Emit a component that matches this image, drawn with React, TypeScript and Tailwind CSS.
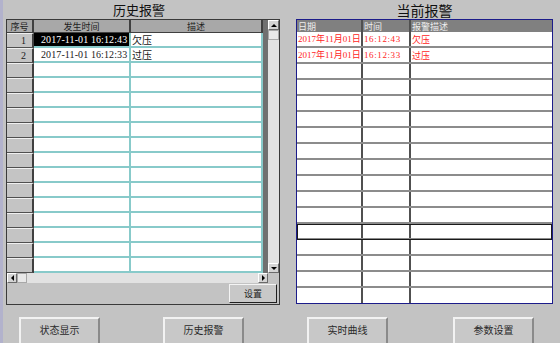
const CJK = "font-['Noto_Sans_CJK_SC',sans-serif]";
const NUM = "font-['Liberation_Serif','Noto_Sans_CJK_SC',serif]";

const history = [
  { n: "1", t: "2017-11-01 16:12:43", d: "欠压", sel: true },
  { n: "2", t: "2017-11-01 16:12:33", d: "过压", sel: false },
];

const current = [
  { date: "2017年11月01日", time: "16:12:43", d: "欠压" },
  { date: "2017年11月01日", time: "16:12:33", d: "过压" },
];

function Arrow({ dir }: { dir: "up" | "down" | "left" | "right" }) {
  const pts = {
    up: "0,4 3,1 6,4",
    down: "0,1 3,4 6,1",
    left: "4,0 1,3 4,6",
    right: "1,0 4,3 1,6",
  }[dir];
  const size = dir === "up" || dir === "down" ? { w: 6, h: 5 } : { w: 5, h: 6 };
  return (
    <svg width={size.w} height={size.h} viewBox={`0 0 ${size.w} ${size.h}`}>
      <polygon points={pts} fill="#000" />
    </svg>
  );
}

function ScrollBtn({ dir, className = "" }: { dir: "up" | "down" | "left" | "right"; className?: string }) {
  return (
    <div
      className={`shrink-0 flex items-center justify-center bg-[#d4d4d4] border border-t-white border-l-white border-r-[#6a6a6a] border-b-[#6a6a6a] ${className}`}
    >
      <Arrow dir={dir} />
    </div>
  );
}

function HistoryRow({ n, t, d, sel }: { n?: string; t?: string; d?: string; sel?: boolean }) {
  return (
    <div className="flex h-[15px] shrink-0">
      <div
        className={`w-[27px] shrink-0 bg-[#c4c4c4] border-t border-t-[#f0f0f0] border-b border-b-[#505050] border-r-2 border-r-[#404040] flex items-center justify-end pr-[6px] text-[10px] leading-none text-[#202020] ${NUM}`}
      >
        {n}
      </div>
      <div
        className={`w-[97px] shrink-0 border-b-2 border-r-2 border-[#88caca] flex items-center pl-[7px] overflow-hidden whitespace-nowrap text-[10px] leading-none tracking-[0.1px] ${NUM} ${
          sel ? "bg-black text-white" : "bg-white text-[#202020]"
        }`}
      >
        {t}
      </div>
      <div
        className={`w-[132px] shrink-0 bg-white border-b-2 border-r-2 border-[#88caca] flex items-center pl-[1px] text-[10px] leading-none text-[#202020] ${CJK}`}
      >
        {d}
      </div>
      <div className="flex-1 bg-[#707070]" />
    </div>
  );
}

function CurrentRow({
  date,
  time,
  d,
  focus,
  last,
}: {
  date?: string;
  time?: string;
  d?: string;
  focus?: boolean;
  last?: boolean;
}) {
  return (
    <div
      className={`flex shrink-0 ${last ? "h-[15px]" : "h-[16px] border-b-2 border-[#8c8c8c]"} ${
        focus ? "outline outline-1 outline-[#1a1a1a] -outline-offset-1" : ""
      } text-[9px] leading-none text-[#ff2424] ${NUM}`}
    >
      <div className="w-[66px] shrink-0 border-r-2 border-[#505050] flex items-center pl-[1px] whitespace-nowrap overflow-hidden">
        {date}
      </div>
      <div className="w-[48px] shrink-0 border-r-2 border-[#505050] flex items-center pl-[1px] whitespace-nowrap tracking-[0.6px]">
        {time}
      </div>
      <div className={`flex-1 flex items-center pl-[1px] ${CJK}`}>{d}</div>
    </div>
  );
}

function NavButton({ label, className = "" }: { label: string; className?: string }) {
  return (
    <div
      className={`w-[81px] h-[30px] shrink-0 bg-[#c8c8c8] border-2 border-t-[#f2f2f2] border-l-[#f2f2f2] border-r-[#8a8a8a] border-b-[#8a8a8a] flex justify-center pt-[4px] text-[10px] leading-[14px] text-[#2a2a2a] ${CJK} ${className}`}
    >
      {label}
    </div>
  );
}

export default function App() {
  const histRows = Array.from({ length: 16 }, (_, i) => history[i] ?? {});
  const curRows = Array.from({ length: 17 }, (_, i) => current[i] ?? {});

  return (
    <div className="w-[560px] h-[343px] overflow-hidden bg-[#c3c3c3] border-l-[3px] border-l-[#b2b2cc] flex flex-col">
      <div className="flex h-[317px] shrink-0">
        {/* 历史报警 */}
        <div className="ml-[3px] w-[274px] flex flex-col">
          <div className={`h-[19px] flex items-center justify-center pr-[8px] text-[13px] leading-none text-[#101010] ${CJK}`}>
            历史报警
          </div>
          <div className="border border-[#3a3a3a] flex flex-col">
            <div className="flex h-[253px]">
              <div className="w-[261px] flex flex-col bg-[#707070]">
                <div className={`flex h-[13px] shrink-0 text-[9px] leading-none text-[#1e1e1e] ${CJK}`}>
                  <div className="w-[27px] shrink-0 bg-[#a8a8a8] border-r-2 border-b border-[#404040] flex items-center justify-center">
                    序号
                  </div>
                  <div className="w-[97px] shrink-0 bg-[#a8a8a8] border-r-2 border-b border-[#404040] flex items-center justify-center">
                    发生时间
                  </div>
                  <div className="w-[132px] shrink-0 bg-[#a8a8a8] border-r-2 border-b border-[#404040] flex items-center justify-center">
                    描述
                  </div>
                  <div className="flex-1 bg-[#707070]" />
                </div>
                {histRows.map((r, i) => (
                  <HistoryRow key={i} {...r} />
                ))}
              </div>
              <div className="w-[11px] flex flex-col bg-[#e2e2e2]">
                <ScrollBtn dir="up" className="h-[10px]" />
                <div className="h-[10px] shrink-0 bg-[#e8e8e8] border border-[#a8a8a8]" />
                <div className="flex-1" />
                <ScrollBtn dir="down" className="h-[10px]" />
              </div>
            </div>
            <div className="flex h-[10px]">
              <div className="w-[261px] flex bg-[#e2e2e2]">
                <ScrollBtn dir="left" className="w-[10px]" />
                <div className="w-[10px] shrink-0 bg-[#e8e8e8] border border-[#a8a8a8]" />
                <div className="flex-1" />
                <ScrollBtn dir="right" className="w-[10px]" />
              </div>
              <div className="flex-1 bg-[#c3c3c3]" />
            </div>
            <div className="h-[21px] flex justify-end items-start pt-[1px] pr-[2px]">
              <div
                className={`w-[48px] h-[19px] bg-[#c8c8c8] border border-t-[#f4f4f4] border-l-[#f4f4f4] border-r-[#202020] border-b-[#202020] flex items-center justify-center text-[9px] leading-none text-[#202020] ${CJK}`}
              >
                设置
              </div>
            </div>
          </div>
        </div>

        {/* 当前报警 */}
        <div className="ml-[16px] w-[257px] flex flex-col">
          <div className={`h-[19px] flex items-center justify-center text-[14px] leading-none text-[#101010] ${CJK}`}>
            当前报警
          </div>
          <div className="border border-[#1c1c8a] bg-white flex flex-col">
            <div className={`flex h-[12px] shrink-0 bg-[#808080] text-[9px] leading-none text-[#eeeeee] ${CJK}`}>
              <div className="w-[66px] shrink-0 border-r-2 border-[#505050] flex items-center pl-[1px]">日期</div>
              <div className="w-[48px] shrink-0 border-r-2 border-[#505050] flex items-center pl-[1px]">时间</div>
              <div className="flex-1 flex items-center pl-[1px]">报警描述</div>
            </div>
            {curRows.map((r, i) => (
              <CurrentRow key={i} {...r} focus={i === 12} last={i === 16} />
            ))}
          </div>
        </div>
      </div>

      {/* 底部导航 */}
      <div className="flex">
        <NavButton label="状态显示" className="ml-[16px]" />
        <NavButton label="历史报警" className="ml-[63px]" />
        <NavButton label="实时曲线" className="ml-[63px]" />
        <NavButton label="参数设置" className="ml-[65px]" />
      </div>
    </div>
  );
}
